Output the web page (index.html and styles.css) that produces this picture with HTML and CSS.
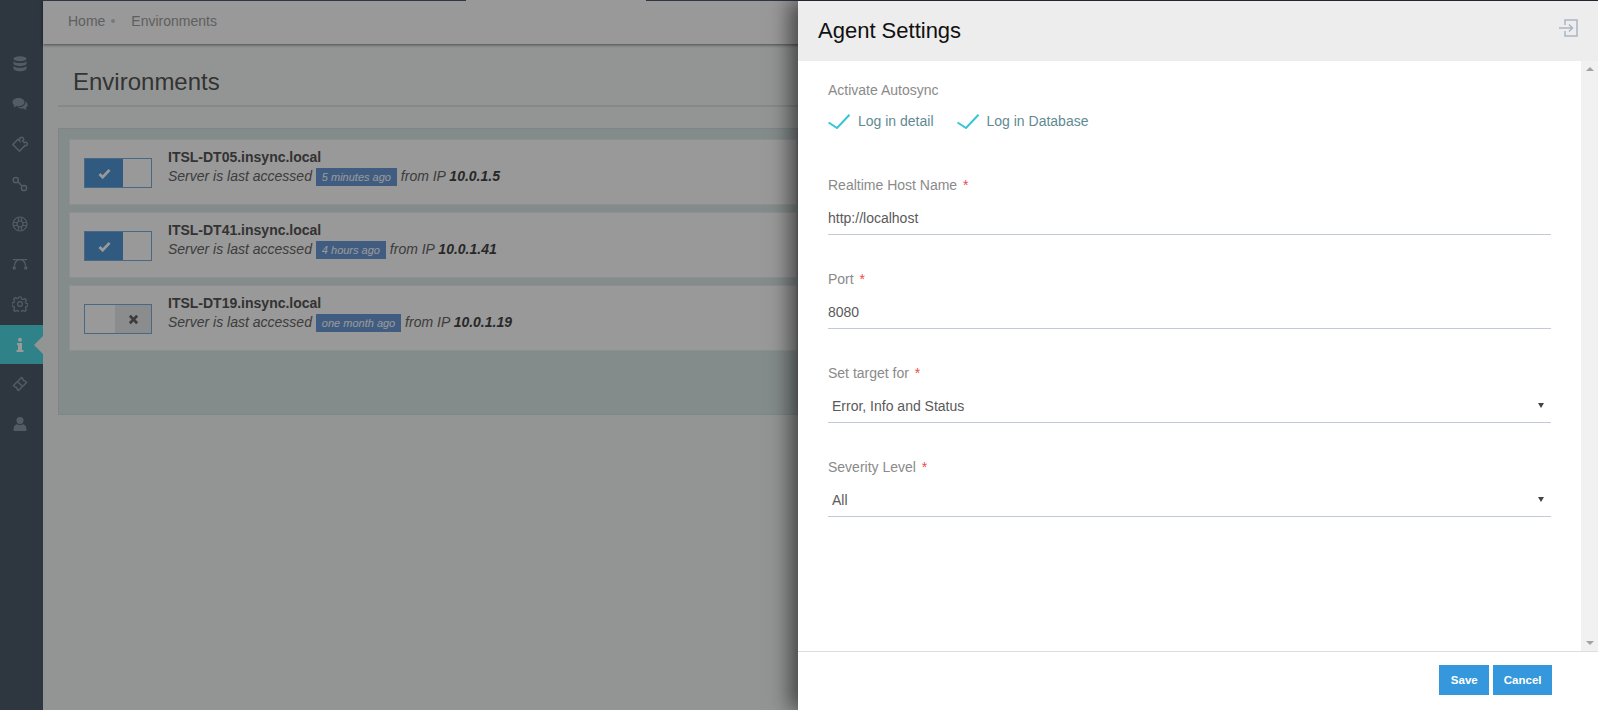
FILE: index.html
```html
<html lang="en">
<head>
  <meta charset="UTF-8">
  <meta name="viewport" content="width=device-width, initial-scale=1.0">
  <title>Environments</title>
  <link rel="stylesheet" href="styles.css">
</head>
<body>
  <div class="app">
    <nav class="sidebar">
      <a class="nav-item"><svg viewBox="0 0 16 16"><ellipse cx="8" cy="2.800" rx="6.500" ry="2.500"/><path d="M1.500 5.200v2.200c0 1.400 2.900 2.500 6.500 2.500s6.500-1.100 6.500-2.500V5.200c-1 1.200-3.500 1.900-6.500 1.900S2.500 6.400 1.500 5.200zM1.500 9.900v2.600c0 1.500 2.900 2.700 6.500 2.700s6.500-1.200 6.500-2.700V9.900c-1 1.200-3.500 1.900-6.500 1.900s-5.500-.7-6.500-1.900z"/></svg></a>
      <a class="nav-item"><svg viewBox="0 0 16 16"><path d="M6.500 2C3 2 .5 3.800.5 6.200c0 1.300.8 2.500 2 3.200-.2.800-.7 1.400-1.200 1.900 1.300-.1 2.500-.6 3.300-1.300.6.100 1.200.2 1.900.2 3.500 0 6-1.800 6-4S10 2 6.500 2z"/><path d="M13.400 5.200c.1.400.1.700.1 1 0 2.900-3 5-7 5h-.8c1 .9 2.500 1.400 4.300 1.400.6 0 1.100-.1 1.600-.2.800.7 2 1.200 3.300 1.300-.5-.5-1-1.100-1.200-1.900 1.200-.7 1.900-1.800 1.900-3 0-1.500-.9-2.800-2.200-3.600z"/></svg></a>
      <a class="nav-item"><svg viewBox="0 0 16 16" class="line thick"><path d="M.8 8.500 6 3.300l1.600 1.500C7 2.600 8.600.8 10.400 1.500c1.600.6 1.800 2.800.3 3.500l1.600 1.600c1-.9 3-.3 3 1.300 0 1.500-1.400 2-2.300 1.600l-5.500 5.700z"/></svg></a>
      <a class="nav-item"><svg viewBox="0 0 16 16" class="line thick"><circle cx="3.800" cy="4" r="2.600"/><circle cx="12" cy="12" r="2.600"/><path d="M5.800 5.800 10 10"/></svg></a>
      <a class="nav-item"><svg viewBox="0 0 16 16" class="line"><circle cx="8" cy="8" r="7"/><circle cx="8" cy="8" r="3"/><path d="M6.500 1.200v3.900M9.500 1.200v3.900M6.500 10.900v3.900M9.500 10.900v3.900M1.200 6.500h3.900M1.200 9.500h3.900M10.900 6.500h3.900M10.900 9.500h3.900"/></svg></a>
      <a class="nav-item"><svg viewBox="0 0 18 16" class="line thick"><path d="M2.500 11C3 6 5.500 3 9 3s6 3 6.500 8M1 3h16"/><circle cx="2.500" cy="12.500" r="1.200"/><circle cx="15.500" cy="12.500" r="1.200"/></svg></a>
      <a class="nav-item"><svg viewBox="0 0 16 16" class="line"><circle cx="8" cy="8" r="2.400"/><path d="M6.800 1h2.400l.4 2 1.500.6 1.700-1.100 1.700 1.700-1.100 1.700.6 1.500 2 .4v2.400l-2 .4-.6 1.500 1.100 1.700-1.700 1.700-1.700-1.100-1.500.6-.4 2H6.800l-.4-2-1.500-.6-1.700 1.100-1.700-1.700 1.100-1.700-.6-1.500-2-.4V6.800l2-.4.6-1.500-1.100-1.700 1.700-1.700 1.700 1.100 1.500-.6z"/></svg></a>
      <a class="nav-item is-active"><svg viewBox="0 0 16 16"><circle cx="8" cy="2.700" r="2"/><path d="M5 6h5v7h1.500v2H4.500v-2H6V8H5z"/></svg></a>
      <a class="nav-item"><svg viewBox="0 0 16 16" class="line thick"><path d="M1.500 9.500 9.500 1.500l1.500 1.500c-.3 1 .8 2.100 2 2l1.500 1.500-8 8L5 13c.3-1-.8-2.100-2-2z"/><path d="M6 6l4 4"/></svg></a>
      <a class="nav-item"><svg viewBox="0 0 16 16"><circle cx="8" cy="4.500" r="3.500"/><path d="M2.500 15c-.8 0-1-.5-1-1.200C1.500 10.500 3 8.500 5 8.300c1.800 1 4.200 1 6 0 2 .2 3.500 2.200 3.500 5.500 0 .7-.2 1.200-1 1.200z"/></svg></a>
    </nav>

    <div class="main">
      <header class="topbar">
        <div class="topbar-stripe">
          <span class="stripe-left"></span>
          <span class="stripe-tab"></span>
          <span class="stripe-right"></span>
        </div>
        <div class="breadcrumb">
          <span>Home</span>
          <span class="crumb-dot"></span>
          <span>Environments</span>
        </div>
      </header>

      <div class="content">
        <h1 class="page-title">Environments</h1>
        <div class="env-panel">
          <div class="env-card">
            <div class="toggle is-on"><span class="toggle-state"><svg viewBox="0 0 14 12"><path d="M1.500 6.500 5 10l7.500-8"/></svg></span></div>
            <div class="env-text">
              <div class="env-name">ITSL-DT05.insync.local</div>
              <div class="env-info">Server is last accessed <span class="badge">5 minutes ago</span> from IP <b>10.0.1.5</b></div>
            </div>
          </div>
          <div class="env-card">
            <div class="toggle is-on"><span class="toggle-state"><svg viewBox="0 0 14 12"><path d="M1.500 6.500 5 10l7.500-8"/></svg></span></div>
            <div class="env-text">
              <div class="env-name">ITSL-DT41.insync.local</div>
              <div class="env-info">Server is last accessed <span class="badge">4 hours ago</span> from IP <b>10.0.1.41</b></div>
            </div>
          </div>
          <div class="env-card">
            <div class="toggle is-off"><span class="toggle-state"><svg viewBox="0 0 12 12"><path d="M2 2l8 8M10 2l-8 8"/></svg></span></div>
            <div class="env-text">
              <div class="env-name">ITSL-DT19.insync.local</div>
              <div class="env-info">Server is last accessed <span class="badge">one month ago</span> from IP <b>10.0.1.19</b></div>
            </div>
          </div>
        </div>
      </div>
    </div>
  </div>

  <div class="backdrop"></div>

  <aside class="drawer">
    <div class="drawer-head">
      <h2 class="drawer-title">Agent Settings</h2>
      <svg class="drawer-close" viewBox="0 0 19 18"><path d="M6 6V1h12v16H6v-5"/><path d="M0 9h13.500M10 5.500 13.500 9 10 12.500"/></svg>
    </div>

    <div class="drawer-body">
      <form class="form">
        <div class="autosync">
          <div class="field-label">Activate Autosync</div>
          <div class="check-row">
            <label class="check"><svg viewBox="0 0 22 15"><path d="M.6 8.500 9 14 21.500.7"/></svg>Log in detail</label>
            <label class="check"><svg viewBox="0 0 22 15"><path d="M.6 8.500 9 14 21.500.7"/></svg>Log in Database</label>
          </div>
        </div>

        <div class="field">
          <div class="field-label">Realtime Host Name <i>*</i></div>
          <input class="field-input" type="text" value="http://localhost">
        </div>
        <div class="field">
          <div class="field-label">Port <i>*</i></div>
          <input class="field-input" type="text" value="8080">
        </div>
        <div class="field">
          <div class="field-label">Set target for <i>*</i></div>
          <div class="select-wrap">
            <select class="field-input field-select"><option>Error, Info and Status</option></select>
          </div>
        </div>
        <div class="field">
          <div class="field-label">Severity Level <i>*</i></div>
          <div class="select-wrap">
            <select class="field-input field-select"><option>All</option></select>
          </div>
        </div>
      </form>
      <div class="scrollbar">
        <span class="arrow-up"></span>
        <span class="arrow-down"></span>
      </div>
    </div>

    <div class="drawer-foot">
      <button class="btn" type="button">Save</button>
      <button class="btn" type="button">Cancel</button>
    </div>
  </aside>
</body>
</html>
```

FILE: styles.css
```css
html, body {
  margin: 0;
  height: 100%;
  overflow: hidden;
}

body {
  font-family: "Liberation Sans", Arial, sans-serif;
  font-size: 14px;
  color: #333;
  background: #fff;
}

.app {
  display: flex;
  height: 710px;
}

/* sidebar */
.sidebar {
  width: 43px;
  flex: none;
  padding-top: 44px;
  background: #4d5a6b;
  box-sizing: border-box;
}

.nav-item {
  display: flex;
  align-items: center;
  justify-content: center;
  position: relative;
  height: 40px;
  padding-right: 4px;
  color: #8d99a6;
}

.nav-item svg {
  width: 16px;
  height: 16px;
  fill: currentColor;
}

.nav-item svg.line {
  fill: none;
  stroke: currentColor;
  stroke-width: 1.200;
}

.nav-item svg.thick {
  stroke-width: 1.500;
}

.nav-item.is-active {
  background: #4fd9e3;
  color: #fff;
  border-top: 1px solid #4d5a6b;
  box-sizing: border-box;
}

.nav-item.is-active::after {
  content: "";
  position: absolute;
  right: 0;
  top: 11px;
  border: 9px solid transparent;
  border-left-width: 0;
  border-right-color: #f5f9f8;
}

/* page */
.main {
  flex: 1;
  display: flex;
  flex-direction: column;
  background: #f5f9f8;
}

.topbar {
  height: 44px;
  background: #fff;
  box-shadow: 0 1px 3px rgba(0, 0, 0, .5);
}

.topbar-stripe {
  display: flex;
  height: 1px;
}

.stripe-left {
  width: 423px;
  background: #4d5a6b;
}

.stripe-tab {
  width: 180px;
}

.stripe-right {
  flex: 1;
  background: #4d5a6b;
}

.breadcrumb {
  display: flex;
  align-items: center;
  height: 39px;
  padding-left: 25px;
  color: #a0a0a0;
}

.crumb-dot {
  width: 4px;
  height: 4px;
  margin: 0 16px 0 6px;
  border-radius: 50%;
  background: #ccc;
}

.content {
  padding: 0 800px 0 15px;
}

.page-title {
  margin: 0;
  padding: 23px 0 9px 15px;
  height: 29px;
  line-height: 29px;
  font-size: 24px;
  font-weight: 400;
  color: #555;
  border-bottom: 2px solid #dce4e4;
}

.env-panel {
  display: flex;
  flex-direction: column;
  gap: 7px;
  height: 275px;
  margin-top: 21px;
  padding: 10px 0 0 10px;
  background: #dde8e8;
  border: 1px solid #d3e0e0;
}

.env-card {
  display: flex;
  align-items: flex-start;
  height: 66px;
  box-sizing: border-box;
  padding: 18px 0 0 14px;
  background: #fff;
  border: 1px solid #ebf1f1;
}

.toggle {
  display: flex;
  width: 68px;
  height: 30px;
  flex: none;
  box-sizing: border-box;
  border: 1px solid #7aaedc;
}

.toggle-state {
  display: flex;
  align-items: center;
  justify-content: center;
  width: 38px;
}

.toggle-state svg {
  width: 13px;
  height: 11px;
  fill: none;
  stroke-width: 3;
}

.is-on .toggle-state {
  background: #5097d6;
}

.is-on svg {
  stroke: #fff;
}

.is-off {
  justify-content: flex-end;
}

.is-off .toggle-state {
  width: 36px;
  background: #e7e9ec;
}

.is-off svg {
  width: 11px;
  stroke: #666;
}

.env-text {
  margin: -10px 0 0 16px;
}

.env-name {
  height: 19px;
  line-height: 19px;
  font-weight: 700;
  color: #555;
}

.env-info {
  height: 19px;
  line-height: 19px;
  font-style: italic;
  color: #666;
}

.env-info b {
  color: #444;
}

.badge {
  display: inline-block;
  height: 18px;
  line-height: 18px;
  padding: 0 6px;
  font-size: 11px;
  color: #fff;
  background: #6b9bd8;
}

/* dimmed layer and drawer */
.backdrop {
  position: absolute;
  inset: 0;
  background: rgba(0, 0, 0, .4);
}

.drawer {
  position: absolute;
  top: 0;
  right: 0;
  bottom: 0;
  display: flex;
  flex-direction: column;
  width: 800px;
  background: #fff;
  box-shadow: -8px 0 20px rgba(0, 0, 0, .55);
}

.drawer-head {
  display: flex;
  align-items: center;
  justify-content: space-between;
  height: 61px;
  flex: none;
  padding: 0 20px 0 20px;
  background: #ededed;
  border-top: 1px solid #22262e;
  box-sizing: border-box;
}

.drawer-title {
  margin: 0;
  font-size: 22px;
  font-weight: 400;
  color: #111;
}

.drawer-close {
  width: 19px;
  height: 18px;
  margin-top: -6px;
  fill: none;
  stroke: #a9b6c3;
  stroke-width: 1.500;
}

.drawer-body {
  flex: 1;
  display: flex;
  border-bottom: 1px solid #ddd;
}

.form {
  flex: 1;
  padding: 19px 30px 0 30px;
}

.field-label {
  height: 20px;
  line-height: 20px;
  color: #8a8a8a;
}

.field-label i {
  margin-left: 2px;
  font-style: normal;
  color: #f0484a;
}

.autosync {
  height: 95px;
}

.check-row {
  display: flex;
  gap: 23px;
  margin-top: 11px;
}

.check {
  display: flex;
  align-items: center;
  height: 20px;
  color: #5f8a93;
}

.check svg {
  width: 22px;
  height: 15px;
  margin-right: 8px;
  fill: none;
  stroke: #36c6d3;
  stroke-width: 2;
}

.field {
  height: 94px;
}

.field-input {
  display: block;
  width: 100%;
  height: 33px;
  margin-top: 7px;
  padding: 0;
  font: 14px "Liberation Sans", Arial, sans-serif;
  color: #5a5a5a;
  background: #fff;
  border: 0;
  border-bottom: 1px solid #c2cad8;
  border-radius: 0;
  outline: 0;
  box-sizing: border-box;
}

.field-select {
  appearance: none;
  padding-left: 4px;
}

.select-wrap {
  position: relative;
}

.select-wrap::after {
  content: "";
  position: absolute;
  right: 7px;
  bottom: 15px;
  border: 3px solid transparent;
  border-bottom-width: 0;
  border-top: 5px solid #444;
}

.scrollbar {
  display: flex;
  flex-direction: column;
  justify-content: space-between;
  align-items: center;
  width: 17px;
  padding: 6px 0;
  background: #f1f1f1;
  box-sizing: border-box;
}

.arrow-up {
  border: 4px solid transparent;
  border-top-width: 0;
  border-bottom: 4px solid #a3a3a3;
}

.arrow-down {
  border: 4px solid transparent;
  border-bottom-width: 0;
  border-top: 4px solid #a3a3a3;
}

.drawer-foot {
  display: flex;
  justify-content: flex-end;
  gap: 4px;
  height: 58px;
  flex: none;
  padding: 13px 46px 0 0;
  box-sizing: border-box;
}

.btn {
  min-width: 50px;
  height: 30px;
  padding: 0 10.5px;
  font: 700 11.5px "Liberation Sans", Arial, sans-serif;
  color: #fff;
  background: #3598dc;
  border: 0;
}
```
